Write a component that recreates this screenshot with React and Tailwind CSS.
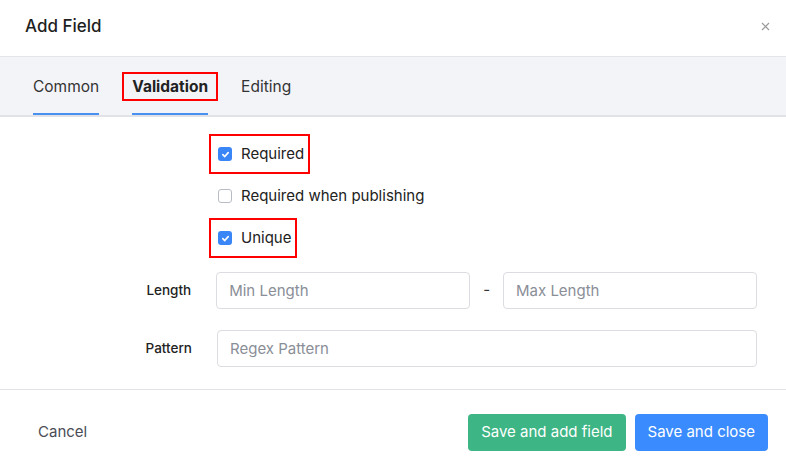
import React from "react";

const Check = ({ checked }) =>
  checked ? (
    <span className="w-[14px] h-[14px] rounded-[3px] bg-[#3b86f7] flex items-center justify-center">
      <svg width="9" height="9" viewBox="0 0 10 10" fill="none">
        <path d="M2 5.2 L4.2 7.3 L8 2.9" stroke="white" strokeWidth="1.8" strokeLinecap="round" strokeLinejoin="round" />
      </svg>
    </span>
  ) : (
    <span className="w-[14px] h-[14px] rounded-[3px] bg-white border border-[#b9bcc4]" />
  );

const CheckRow = ({ label, checked, marked }) => (
  <div className="h-[42px] flex items-center">
    <div className="relative flex items-center gap-[9px]">
      <Check checked={checked} />
      <span className="text-[15px] text-[#222]">{label}</span>
      {marked && <span className="absolute -left-[9px] -right-[6px] -top-[9px] -bottom-[9px] border-2 border-[#f00]" />}
    </div>
  </div>
);

const Tab = ({ label, underline, bold, marked }) => (
  <div className={`relative h-full pt-[4px] flex items-center border-b-2 ${underline ? "border-[#4a90ef]" : "border-transparent"}`}>
    <span className={`text-[15.5px] ${bold ? "font-bold text-[#222]" : "text-[#333]"}`}>{label}</span>
    {marked && <span className="absolute -left-[10px] -right-[10px] top-[15px] bottom-[12px] border-2 border-[#f00]" />}
  </div>
);

const inputCls =
  "h-[37px] rounded-[4px] border border-[#dcdde2] px-[12px] text-[15px] placeholder:text-[#8a8e97] outline-none";

const App = () => {
  const tabs = [
    { label: "Common", underline: true },
    { label: "Validation", underline: true, bold: true, marked: true },
    { label: "Editing" },
  ];

  return (
    <div className="w-[786px] h-[474px] bg-white flex flex-col" style={{ fontFamily: "Inter, 'Noto Sans', sans-serif" }}>
      <header className="h-[57px] px-[25px] flex items-center justify-between border-b border-[#e4e5ea]">
        <h1 className="text-[17px] font-medium text-[#1f1f1f] -mt-[3px]">Add Field</h1>
        <svg width="9" height="9" viewBox="0 0 9 9" className="mr-[-9px] -mt-[3px]">
          <path d="M1 1 L8 8 M8 1 L1 8" stroke="#9a9a9a" strokeWidth="1.2" />
        </svg>
      </header>

      <nav className="h-[60px] bg-[#f3f4f8] border-b-2 border-[#e1e2e7] px-[33px] flex gap-[33px]">
        {tabs.map((t) => (
          <Tab key={t.label} {...t} />
        ))}
      </nav>

      <main className="flex-1 flex flex-col">
        <div className="pl-[218px] pt-[16px] flex flex-col">
          <CheckRow label="Required" checked marked />
          <CheckRow label="Required when publishing" />
          <CheckRow label="Unique" checked marked />
        </div>

        <div className="px-[29px] pt-[13px] flex flex-col gap-[21px]">
          <div className="flex items-center">
            <label className="w-[188px] pr-[25px] text-right text-[13.5px] font-medium text-[#222]">Length</label>
            <input className={`w-[254px] ${inputCls}`} placeholder="Min Length" />
            <span className="w-[33px] text-center text-[15px] text-[#333]">-</span>
            <input className={`w-[254px] ${inputCls}`} placeholder="Max Length" />
          </div>
          <div className="flex items-center">
            <label className="w-[188px] pr-[25px] text-right text-[13.5px] font-medium text-[#222]">Pattern</label>
            <input className={`w-[540px] ${inputCls}`} placeholder="Regex Pattern" />
          </div>
        </div>
      </main>

      <footer className="h-[85px] border-t border-[#e1e2e6] pl-[38px] pr-[18px] flex items-center justify-between">
        <button className="text-[15px] text-[#4a4d55]">Cancel</button>
        <div className="flex gap-[9px]">
          <button className="h-[37px] px-[13px] rounded-[4px] bg-[#3db584] text-white text-[15px]">Save and add field</button>
          <button className="h-[37px] px-[13px] rounded-[4px] bg-[#3a8bfd] text-white text-[15px]">Save and close</button>
        </div>
      </footer>
    </div>
  );
};

export default App;
